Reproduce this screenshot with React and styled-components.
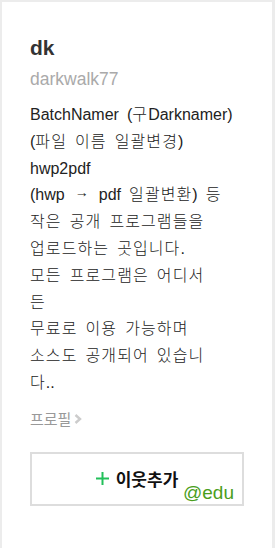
import React from "react";
import styled, { createGlobalStyle } from "styled-components";

const GlobalStyle = createGlobalStyle`
  html, body {
    margin: 0;
    padding: 0;
    background: #ececec;
  }
  body {
    font-family: Arial, "Liberation Sans", "Noto Sans CJK KR", sans-serif;
  }
`;

const Card = styled.div`
  margin: 2px 3px 0 2px;
  min-height: 546px;
  background: #fff;
  padding: 34px 28px 0 28px;
  box-sizing: border-box;
  display: flex;
  flex-direction: column;
  align-items: flex-start;
`;

const Name = styled.div`
  font-weight: bold;
  font-size: 21px;
  line-height: 24px;
  color: #333;
`;

const UserId = styled.div`
  margin-top: 8px;
  font-size: 17.5px;
  line-height: 22px;
  color: #aaa;
`;

const Bio = styled.div`
  margin-top: 12px;
  font-size: 16px;
  line-height: 26.8px;
  color: #222;
  word-spacing: 3.6px;
`;

const Line = styled.span`
  display: block;
  white-space: nowrap;
`;

const Hangul = styled.span`
  font-family: "Noto Sans CJK KR", sans-serif;
  font-weight: 300;
  line-height: 16px;
  letter-spacing: 1.1px;
`;

const Arrow = styled.span`
  display: inline-block;
  width: 18px;
  overflow: hidden;
  text-align: center;
  font-size: 14px;
  line-height: 16px;
  word-spacing: 0;
`;

const ProfileLink = styled.a`
  display: inline-flex;
  align-items: center;
  gap: 3px;
  margin-top: 12px;
  font-family: "Noto Sans CJK KR", sans-serif;
  font-size: 15px;
  line-height: 20px;
  color: #999;
  text-decoration: none;
`;

const AddButton = styled.div`
  position: relative;
  margin-top: 23px;
  width: 214px;
  height: 54px;
  border: 2px solid #ddd;
  box-sizing: border-box;
  display: flex;
  align-items: center;
  justify-content: center;
  gap: 7px;
  font-family: "Noto Sans CJK KR", sans-serif;
  font-size: 17px;
  font-weight: bold;
  color: #111;
`;

const Badge = styled.span`
  position: absolute;
  right: 8px;
  bottom: 2px;
  font-family: Arial, "Liberation Sans", sans-serif;
  font-size: 19px;
  line-height: 19px;
  font-weight: normal;
  color: #4a9e1c;
`;

const bio = [
  "BatchNamer (구Darknamer)",
  "(파일 이름 일괄변경)",
  "hwp2pdf",
  "(hwp → pdf 일괄변환) 등",
  "작은 공개 프로그램들을",
  "업로드하는 곳입니다.",
  "모든 프로그램은 어디서",
  "든",
  "무료로 이용 가능하며",
  "소스도 공개되어 있습니",
  "다..",
];

// hangul and the arrow get their own spans so latin keeps its narrower width
function renderLine(text) {
  return text.split(/([\uAC00-\uD7A3]+|→)/).map((part, i) => {
    if (part === "→") return <Arrow key={i}>→</Arrow>;
    if (/[\uAC00-\uD7A3]/.test(part)) return <Hangul key={i}>{part}</Hangul>;
    return part;
  });
}

export default function App() {
  return (
    <>
      <GlobalStyle />
      <Card>
        <Name>dk</Name>
        <UserId>darkwalk77</UserId>
        <Bio>
          {bio.map((l, i) => (
            <Line key={i}>{renderLine(l)}</Line>
          ))}
        </Bio>
        <ProfileLink href="#">
          프로필
          <svg width="8" height="10" viewBox="0 0 8 10">
            <path d="M1.5 1 L6 5 L1.5 9" fill="none" stroke="#ccc" strokeWidth="2.4" />
          </svg>
        </ProfileLink>
        <AddButton>
          <svg width="13" height="13" viewBox="0 0 13 13">
            <path d="M6.5 0 V13 M0 6.5 H13" stroke="#22c05a" strokeWidth="2" />
          </svg>
          이웃추가
          <Badge>@edu</Badge>
        </AddButton>
      </Card>
    </>
  );
}
